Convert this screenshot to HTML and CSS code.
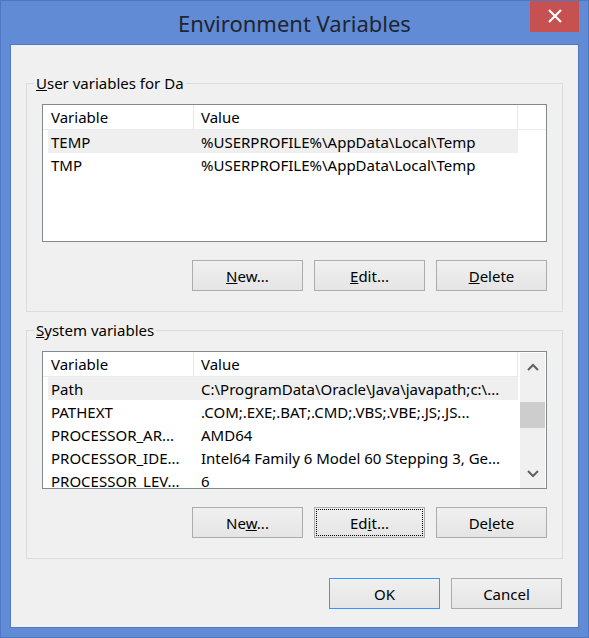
FILE: index.html
```html
<!DOCTYPE html>
<html lang="en">
<head>
<meta charset="utf-8">
<title>Environment Variables</title>
<link rel="stylesheet" href="styles.css">
</head>
<body>
<div class="window">
  <div class="titlebar">
    <span class="tb-spacer"></span>
    <h1 class="title">Environment Variables</h1>
    <button class="close" aria-label="Close">
      <svg width="16" height="14" viewBox="0 0 16 14"><path d="M2 1 L14 13 M14 1 L2 13" stroke="#fff" stroke-width="2.2" fill="none"/></svg>
    </button>
  </div>
  <div class="client">
    <fieldset class="group group-user">
      <legend class="group-label"><u>U</u>ser variables for Da</legend>
      <div class="list">
        <div class="list-main">
          <div class="header">
            <div class="hcell hc1">Variable</div>
            <div class="hcell hc2">Value</div>
            <div class="hfill"></div>
          </div>
          <div class="rows">
            <div class="row selected"><span class="cell c1">TEMP</span><span class="cell c2">%USERPROFILE%\AppData\Local\Temp</span></div>
            <div class="row"><span class="cell c1">TMP</span><span class="cell c2">%USERPROFILE%\AppData\Local\Temp</span></div>
          </div>
        </div>
      </div>
      <div class="buttons">
        <button class="btn"><u>N</u>ew...</button>
        <button class="btn"><u>E</u>dit...</button>
        <button class="btn"><u>D</u>elete</button>
      </div>
    </fieldset>

    <fieldset class="group group-system">
      <legend class="group-label"><u>S</u>ystem variables</legend>
      <div class="list">
        <div class="list-main">
          <div class="header">
            <div class="hcell hc1">Variable</div>
            <div class="hcell hc2">Value</div>
          </div>
          <div class="rows">
            <div class="row selected"><span class="cell c1">Path</span><span class="cell c2">C:\ProgramData\Oracle\Java\javapath;c:\...</span></div>
            <div class="row"><span class="cell c1">PATHEXT</span><span class="cell c2">.COM;.EXE;.BAT;.CMD;.VBS;.VBE;.JS;.JS...</span></div>
            <div class="row"><span class="cell c1">PROCESSOR_AR...</span><span class="cell c2">AMD64</span></div>
            <div class="row"><span class="cell c1">PROCESSOR_IDE...</span><span class="cell c2">Intel64 Family 6 Model 60 Stepping 3, Ge...</span></div>
            <div class="row"><span class="cell c1">PROCESSOR_LEV...</span><span class="cell c2">6</span></div>
          </div>
        </div>
        <div class="scrollbar">
          <div class="sb-arrow">
            <svg width="12" height="8" viewBox="0 0 12 8"><path d="M1 7 L6 2 L11 7" stroke="#606060" stroke-width="2" fill="none"/></svg>
          </div>
          <div class="sb-gap"></div>
          <div class="sb-thumb"></div>
          <div class="sb-track"></div>
          <div class="sb-arrow">
            <svg width="12" height="8" viewBox="0 0 12 8"><path d="M1 1 L6 6 L11 1" stroke="#606060" stroke-width="2" fill="none"/></svg>
          </div>
        </div>
      </div>
      <div class="buttons">
        <button class="btn">Ne<u>w</u>...</button>
        <button class="btn focused">Ed<u>i</u>t...</button>
        <button class="btn">De<u>l</u>ete</button>
      </div>
    </fieldset>

    <div class="dialog-buttons">
      <button class="btn default">OK</button>
      <button class="btn">Cancel</button>
    </div>
  </div>
</div>
</body>
</html>
```

FILE: styles.css
```css
* { box-sizing: border-box; }
html, body { margin: 0; padding: 0; background: #ffffff; }
body {
  font-family: "Noto Sans", "Open Sans", sans-serif;
  font-size: 15px;
  color: #000;
}
.window {
  width: 589px;
  height: 638px;
  background: #618bd4;
  border: 1px solid #4f78c2;
  padding: 0 9px 9px 9px;
  display: flex;
  flex-direction: column;
}
.titlebar {
  height: 43px;
  display: grid;
  grid-template-columns: 1fr auto 1fr;
  align-items: start;
}
.title {
  margin: 0;
  padding-top: 8px;
  font-size: 22px;
  font-weight: normal;
  line-height: 29px;
  color: #1f2530;
  white-space: nowrap;
}
.close {
  justify-self: end;
  width: 49px;
  height: 31px;
  border: 0;
  padding: 0;
  background: #c75050;
  display: flex;
  align-items: center;
  justify-content: center;
}
.close svg { display: block; margin-top: -1px; }
.client {
  flex: 1;
  background: #f0f0f0;
  border: 1px solid #5079c2;
  padding: 0 15px 0 15px;
  display: flex;
  flex-direction: column;
}
.group {
  margin: 0;
  border: 1px solid #dcdcdc;
  padding: 11px 0 20px 0;
  min-width: 0;
}
.group-user { margin-top: 29px; }
.group-system { margin-top: 9px; }
.group-label {
  margin-left: 7px;
  padding: 0 2px;
  line-height: 19px;
  font-size: 15px;
}
.list {
  height: 138px;
  margin: 0 15px;
  border: 1px solid #828790;
  background: #fff;
  display: flex;
  overflow: hidden;
}
.list-main {
  flex: 1;
  min-width: 0;
  overflow: hidden;
}
.header {
  height: 25px;
  display: flex;
  border-bottom: 1px solid #e5ebf3;
  background: #fff;
}
.hcell {
  line-height: 23px;
  padding-top: 1px;
  border-right: 1px solid #e3eaf4;
  white-space: nowrap;
}
.hc1 { width: 151px; padding-left: 8px; }
.hc2 { width: 324px; padding-left: 7px; }
.hfill { flex: 1; }
.rows { padding-left: 5px; }
.row {
  width: 470px;
  height: 23px;
  display: flex;
  white-space: nowrap;
}
.row.selected { background: #efefef; }
.cell {
  padding-left: 3px;
  padding-top: 1px;
  overflow: hidden;
  line-height: 22px;
}
.c1 { width: 150px; flex: none; }
.c2 { flex: 1; min-width: 0; }
.scrollbar {
  width: 25px;
  margin: 1px 1px 0 1px;
  background: #f0f0f0;
  display: flex;
  flex-direction: column;
}
.sb-arrow {
  height: 28px;
  display: flex;
  align-items: center;
  justify-content: center;
}
.sb-gap { height: 21px; }
.sb-thumb { height: 26px; background: #cdcdcd; }
.sb-track { flex: 1; }
.buttons {
  margin: 18px 15px 0 15px;
  display: flex;
  justify-content: flex-end;
  gap: 11px;
}
.btn {
  width: 111px;
  height: 31px;
  border: 1px solid #acacac;
  background: linear-gradient(#f0f0f0, #e5e5e5);
  font-family: "Noto Sans", "Open Sans", sans-serif;
  font-size: 15px;
  color: #000;
  padding: 0;
  line-height: 28px;
}
.btn.focused {
  outline: 1px dotted #000;
  outline-offset: -3px;
}
.btn.default { border-color: #3399ff; }
.dialog-buttons {
  margin-top: 19px;
  display: flex;
  justify-content: flex-end;
  gap: 11px;
  padding-right: 1px;
}
```
